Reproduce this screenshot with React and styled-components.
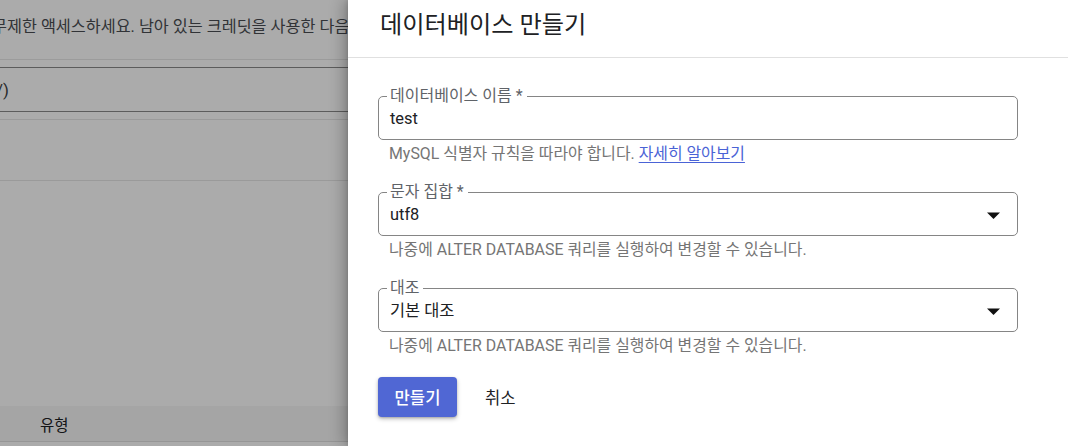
import React from "react";
import styled, { createGlobalStyle } from "styled-components";

const Global = createGlobalStyle`
  html, body { margin: 0; padding: 0; }
  body {
    width: 1068px; height: 446px; overflow: hidden; background: #fff;
    font-family: Roboto, "Noto Sans CJK KR", "Noto Sans", sans-serif;
  }
  * { box-sizing: border-box; }
`;

const Screen = styled.div`
  position: relative;
  width: 1068px;
  height: 446px;
  overflow: hidden;
`;

/* ---------- page behind the drawer ---------- */
const Page = styled.div`
  display: flex;
  flex-direction: column;
  width: 1068px;
  height: 446px;
  background: #fff;
  overflow: hidden;
`;

const Intro = styled.p`
  margin: 0 0 0 -8px;
  height: 60px;
  padding-top: 16px;
  font-size: 16.25px;
  line-height: 22px;
  color: #4a4d52;
  white-space: nowrap;
  border-bottom: 1px solid #e8e8e8;
`;

const BgField = styled.div`
  margin: 7px 0 0 -4px;
  height: 45px;
  display: flex;
  align-items: center;
  border-top: 1px solid #8a8a8a;
  border-bottom: 1px solid #8a8a8a;
  font-size: 17px;
  color: #3c4043;
`;

const BgDivider = styled.div`
  height: 1px;
  background: #e6e6e6;
  margin-top: ${(p) => p.$mt}px;
`;

const Spacer = styled.div`
  flex: 1;
`;

const TableHead = styled.div`
  height: 36px;
  display: flex;
  align-items: center;
  padding-left: 40px;
  background: #f6f6f6;
  border-bottom: 1px solid #e0e0e0;
  font-size: 15.5px;
  color: #202124;
  margin-bottom: 4px;
`;

const Backdrop = styled.div`
  position: absolute;
  inset: 0;
  background: rgba(0, 0, 0, 0.33);
`;

/* ---------- drawer ---------- */
const Drawer = styled.aside`
  position: absolute;
  top: 0;
  right: 0;
  width: 720px;
  height: 446px;
  background: #fff;
  box-shadow: -5px 0 14px rgba(0, 0, 0, 0.24), -1px 0 4px rgba(0, 0, 0, 0.12);
  display: flex;
  flex-direction: column;
`;

const Header = styled.header`
  height: 58px;
  display: flex;
  align-items: center;
  padding: 0 0 12px 32px;
  border-bottom: 1px solid #e0e0e0;
`;

const Title = styled.h1`
  margin: 0;
  font-size: 24.2px;
  font-weight: 400;
  color: #202124;
`;

const Body = styled.div`
  padding: 38px 50px 0 30px;
  display: flex;
  flex-direction: column;
`;

const Group = styled.div`
  height: 96px;
  display: flex;
  flex-direction: column;
`;

const Outline = styled.div`
  position: relative;
  height: 44px;
  border: 1px solid #858585;
  border-radius: 5px;
  display: flex;
  align-items: center;
  padding: 2px 0 0 11px;
`;

const Legend = styled.span`
  position: absolute;
  top: -11px;
  left: 8px;
  padding: 0 4px 0 3px;
  background: #fff;
  font-size: 16px;
  line-height: 20px;
  color: #5f6368;
  white-space: nowrap;
`;

const Value = styled.span`
  flex: 1;
  font-size: 16.4px;
  line-height: 20px;
  color: #202124;
`;

const Caret = styled.svg`
  width: 13px;
  height: 7px;
  margin-right: 17px;
  flex: none;
`;

const Helper = styled.p`
  margin: 4px 0 0 11px;
  font-size: 15.9px;
  line-height: 20px;
  color: #757575;
  white-space: nowrap;
`;

const Link = styled.a`
  color: #4a63d6;
  text-decoration: underline;
  text-underline-offset: 3px;
  cursor: pointer;
`;

const Actions = styled.div`
  display: flex;
  align-items: center;
  gap: 12px;
  margin-top: -7px;
`;

const Primary = styled.button`
  width: 79px;
  height: 40px;
  border: none;
  border-radius: 4px;
  background: #5067d4;
  color: #fff;
  font-family: inherit;
  font-size: 16.6px;
  font-weight: 500;
  box-shadow: 0 2px 4px rgba(0, 0, 0, 0.25), 0 1px 2px rgba(0, 0, 0, 0.15);
  cursor: pointer;
`;

const TextButton = styled.button`
  height: 40px;
  padding: 0 16px;
  border: none;
  background: transparent;
  color: #202124;
  font-family: inherit;
  font-size: 16.6px;
  cursor: pointer;
`;

const ArrowDown = () => (
  <Caret viewBox="0 0 13 7">
    <path d="M0 0.5h13L6.5 7z" fill="#111" />
  </Caret>
);

const Field = ({ label, value, select, children }) => (
  <Group>
    <Outline>
      <Legend>{label}</Legend>
      <Value>{value}</Value>
      {select && <ArrowDown />}
    </Outline>
    <Helper>{children}</Helper>
  </Group>
);

export default function App() {
  return (
    <Screen>
      <Global />
      <Page>
        <Intro>무제한 액세스하세요. 남아 있는 크레딧을 사용한 다음</Intro>
        <BgField>/)</BgField>
        <BgDivider $mt={7} />
        <BgDivider $mt={60} />
        <Spacer />
        <TableHead>유형</TableHead>
      </Page>
      <Backdrop />
      <Drawer>
        <Header>
          <Title>데이터베이스 만들기</Title>
        </Header>
        <Body>
          <Field label="데이터베이스 이름 *" value="test">
            MySQL 식별자 규칙을 따라야 합니다. <Link>자세히 알아보기</Link>
          </Field>
          <Field label="문자 집합 *" value="utf8" select>
            나중에 ALTER DATABASE 쿼리를 실행하여 변경할 수 있습니다.
          </Field>
          <Field label="대조" value="기본 대조" select>
            나중에 ALTER DATABASE 쿼리를 실행하여 변경할 수 있습니다.
          </Field>
          <Actions>
            <Primary>만들기</Primary>
            <TextButton>취소</TextButton>
          </Actions>
        </Body>
      </Drawer>
    </Screen>
  );
}
